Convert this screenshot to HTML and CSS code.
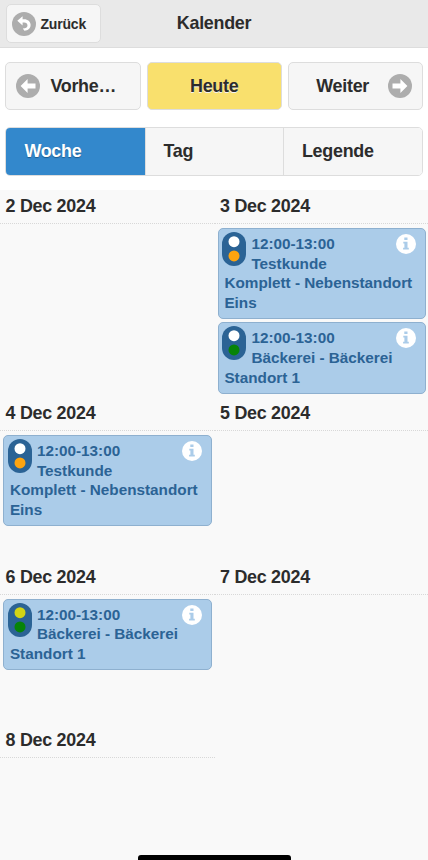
FILE: index.html
```html
<!DOCTYPE html>
<html lang="de">
<head>
<meta charset="utf-8">
<meta name="viewport" content="width=device-width, initial-scale=1">
<title>Kalender</title>
<link rel="stylesheet" href="styles.css">
</head>
<body>
<svg class="defs" width="0" height="0" aria-hidden="true">
  <symbol id="light" viewBox="0 0 24 34">
    <rect width="24" height="34" rx="12" fill="#2b6395"/>
    <circle cx="12" cy="9.7" r="5.5" fill="var(--top)"/>
    <circle cx="12" cy="23.9" r="5.5" fill="var(--bottom)"/>
  </symbol>
  <symbol id="info" viewBox="0 0 20 20">
    <circle cx="10" cy="10" r="10" fill="#fff"/>
    <path d="M8.3 3.5h3.2v2.6H8.3zM7.3 7.7h4.2v6h1.3v1.7H7.1v-1.7h1.3V9.4H7.3z" fill="#abcce9"/>
  </symbol>
</svg>
<header class="bar">
  <button class="btn back">
    <svg width="24" height="24" viewBox="0 0 24 24"><circle cx="12" cy="12" r="12" fill="#adadad"/><path d="M5.300 8.700 10.600 4.300v3h1.500c3.700 0 6.500 2.400 6.500 5.700s-2.500 5.500-6.200 5.700l-1.600-2.200c3 0 4.700-1.100 4.700-3 0-1.800-1.400-2.900-3.400-2.900h-1.500v2.800z" fill="#fff"/></svg>
    <span>Zurück</span>
  </button>
  <h1>Kalender</h1>
</header>
<nav class="pager">
  <button class="btn prev">
    <svg width="24" height="24" viewBox="0 0 24 24"><circle cx="12" cy="12" r="12" fill="#adadad"/><path d="M4.600 12 11.600 5v4.600h7.900v4.800h-7.900V19z" fill="#fff"/></svg>
    <span>Vorhe…</span>
  </button>
  <button class="btn today">Heute</button>
  <button class="btn next">
    <span>Weiter</span>
    <svg width="24" height="24" viewBox="0 0 24 24"><circle cx="12" cy="12" r="12" fill="#adadad"/><path d="M19.400 12 12.400 5v4.600H4.500v4.800h7.900V19z" fill="#fff"/></svg>
  </button>
</nav>
<nav class="tabs">
  <button class="tab active">Woche</button>
  <button class="tab">Tag</button>
  <button class="tab">Legende</button>
</nav>
<main class="week">
  <section class="day"><h2>2 Dec 2024</h2></section>
  <section class="day">
    <h2>3 Dec 2024</h2>
    <article class="event"><svg class="light white orange"><use href="#light"/></svg><svg class="info"><use href="#info"/></svg>12:00-13:00<br>Testkunde<br>Komplett - Nebenstandort<br>Eins</article>
    <article class="event"><svg class="light white green"><use href="#light"/></svg><svg class="info"><use href="#info"/></svg>12:00-13:00<br>Bäckerei - Bäckerei<br>Standort 1</article>
  </section>
  <section class="day">
    <h2>4 Dec 2024</h2>
    <article class="event"><svg class="light white orange"><use href="#light"/></svg><svg class="info"><use href="#info"/></svg>12:00-13:00<br>Testkunde<br>Komplett - Nebenstandort<br>Eins</article>
  </section>
  <section class="day"><h2>5 Dec 2024</h2></section>
  <section class="day">
    <h2>6 Dec 2024</h2>
    <article class="event"><svg class="light yellow green"><use href="#light"/></svg><svg class="info"><use href="#info"/></svg>12:00-13:00<br>Bäckerei - Bäckerei<br>Standort 1</article>
  </section>
  <section class="day"><h2>7 Dec 2024</h2></section>
  <section class="day"><h2>8 Dec 2024</h2></section>
</main>
<div class="home-indicator"></div>
</body>
</html>
```
FILE: styles.css
```css
* { box-sizing: border-box; }
body {
  margin: 0;
  height: 860px;
  display: flex;
  flex-direction: column;
  overflow: hidden;
  position: relative;
  background: #fff;
  color: #2c2c2c;
  font: bold 17.900px "Liberation Sans", Arial, sans-serif;
  letter-spacing: -0.270px;
}
svg { flex: none; }
.defs { position: absolute; }
h1, h2 { margin: 0; font-size: 17.900px; }
button { margin: 0; padding: 0; font: inherit; letter-spacing: inherit; color: inherit; text-shadow: 0 1px 0 #f3f3f3; }
.btn {
  display: flex;
  align-items: center;
  background: #f6f6f6;
  border: 1px solid #dddddd;
  border-radius: 5px;
}
.bar {
  flex: none;
  height: 48px;
  display: grid;
  grid-template-columns: 1fr auto 1fr;
  align-items: center;
  padding: 0 6px;
  background: #e9e9e9;
  border-bottom: 1px solid #dddddd;
}
.back { width: 95px; height: 39px; padding-left: 5px; gap: 4.500px; font-size: 14px; letter-spacing: -0.200px; }
.pager {
  flex: none;
  display: grid;
  grid-template-columns: repeat(3, 1fr);
  gap: 6px;
  padding: 14px 5px 0 5.400px;
}
.pager .btn { height: 48px; }
.prev { padding-left: 10px; gap: 10px; }
.pager .today { justify-content: center; background: #f9e06d; }
.next { justify-content: flex-end; padding-right: 10px; gap: 19px; }
.tabs {
  flex: none;
  display: grid;
  grid-template-columns: repeat(3, 1fr);
  height: 49px;
  margin: 17px 5px 14px 5.400px;
  border: 1px solid #dddddd;
  border-radius: 5px;
  overflow: hidden;
}
.tab {
  text-align: left;
  padding-left: 17.500px;
  border: 0;
  border-left: 1px solid #dddddd;
  background: #f6f6f6;
}
.tab.active {
  margin: -1px 0 -1px -1px;
  padding-left: 19px;
  border: 0;
  background: #3388cc;
  color: #fff;
  text-shadow: 0 1px 1px #1f5c8d;
}
.week {
  flex: 1;
  display: grid;
  grid-template-columns: 214.500px 1fr;
  grid-template-rows: 207px 163.500px 163.500px 1fr;
  background: #f9f9f9;
}
.day h2 {
  height: 34px;
  padding-left: 5.500px;
  line-height: 33px;
  border-bottom: 1px dotted #d8d8d8;
}
.event {
  position: relative;
  margin: 4px 2.500px 0 3.400px;
  padding: 5px 5px 5.500px 5.500px;
  border: 1px solid #8eb0cf;
  border-radius: 5px;
  background: #abcce9;
  color: #2b6395;
  font-size: 15.300px;
  letter-spacing: 0;
  line-height: 19.700px;
}
.event + .event { margin-top: 3px; }
.light { float: left; width: 24px; height: 34px; margin: -2px 5px 0 -2px; }
.info { position: absolute; top: 5px; right: 9px; width: 20px; height: 20px; }
.white { --top: #fff; }
.yellow { --top: #d2d515; }
.orange { --bottom: #ffa40f; }
.green { --bottom: #078407; }
.home-indicator {
  position: absolute;
  left: 138px;
  bottom: 0;
  width: 153px;
  height: 5px;
  border-radius: 3px 3px 0 0;
  background: #000;
}
```
